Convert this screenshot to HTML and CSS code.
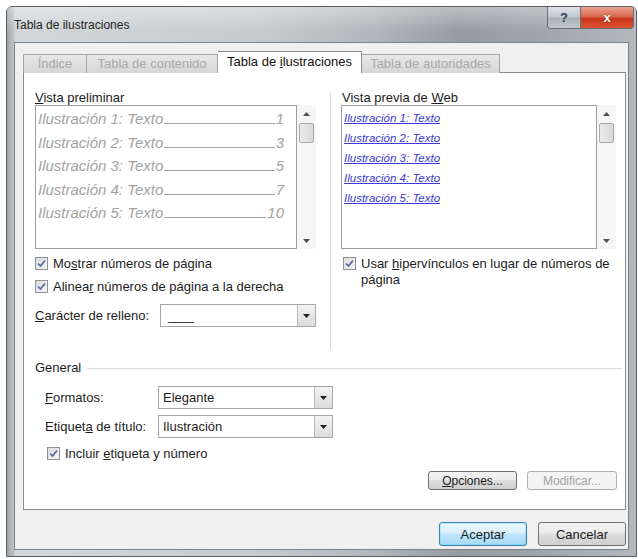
FILE: index.html
```html
<!DOCTYPE html>
<html lang="es">
<head>
<meta charset="utf-8">
<title>Tabla de ilustraciones</title>
<link rel="stylesheet" href="styles.css">
</head>
<body>
<div class="window">
  <div class="titlebar">
    <span class="title">Tabla de ilustraciones</span>
    <div class="caption-buttons">
      <span class="cap-btn help">?</span>
      <span class="cap-btn close">x</span>
    </div>
  </div>

  <div class="client">
    <div class="tabs">
      <span class="tab tab-indice">Índice</span>
      <span class="tab tab-contenido">Tabla de contenido</span>
      <span class="tab tab-active">Tabla de <u>i</u>lustraciones</span>
      <span class="tab tab-autoridades">Tabla de autoridades</span>
    </div>

    <div class="panel">
      <div class="panes">
        <div class="pane pane-left">
          <div class="caption-label"><u>V</u>ista preliminar</div>
          <div class="listwrap">
            <div class="list list-print">
              <div class="entry"><span>Ilustración 1: Texto</span><span class="leader"></span><span class="num">1</span></div>
              <div class="entry"><span>Ilustración 2: Texto</span><span class="leader"></span><span class="num">3</span></div>
              <div class="entry"><span>Ilustración 3: Texto</span><span class="leader"></span><span class="num">5</span></div>
              <div class="entry"><span>Ilustración 4: Texto</span><span class="leader"></span><span class="num">7</span></div>
              <div class="entry"><span>Ilustración 5: Texto</span><span class="leader"></span><span class="num">10</span></div>
            </div>
            <div class="scrollbar">
              <span class="sb-btn"><svg width="7" height="4" viewBox="0 0 7 4"><path d="M0 4 L3.5 0 L7 4 Z"/></svg></span>
              <span class="sb-thumb"></span>
              <span class="sb-track"></span>
              <span class="sb-btn"><svg width="7" height="4" viewBox="0 0 7 4"><path d="M0 0 L7 0 L3.5 4 Z"/></svg></span>
            </div>
          </div>
          <label class="check row-show">
            <span class="box"><svg width="11" height="11" viewBox="0 0 11 11"><path d="M2 5.5 L4.5 8 L9 2.5"/></svg></span>
            <span class="check-text">Mo<u>s</u>trar números de página</span>
          </label>
          <label class="check row-align">
            <span class="box"><svg width="11" height="11" viewBox="0 0 11 11"><path d="M2 5.5 L4.5 8 L9 2.5"/></svg></span>
            <span class="check-text">Alinea<u>r</u> números de página a la derecha</span>
          </label>
          <div class="field-row row-fill">
            <span class="field-label fill-label"><u>C</u>arácter de relleno:</span>
            <div class="select select-fill">
              <span class="val fill-val">____</span>
              <span class="arrow"><svg width="7" height="4" viewBox="0 0 7 4"><path d="M0 0 L7 0 L3.5 4 Z"/></svg></span>
            </div>
          </div>
        </div>

        <div class="sep"></div>

        <div class="pane pane-right">
          <div class="caption-label">Vista previa de <u>W</u>eb</div>
          <div class="listwrap">
            <div class="list list-web">
              <div class="link">Ilustración 1: Texto</div>
              <div class="link">Ilustración 2: Texto</div>
              <div class="link">Ilustración 3: Texto</div>
              <div class="link">Ilustración 4: Texto</div>
              <div class="link">Ilustración 5: Texto</div>
            </div>
            <div class="scrollbar">
              <span class="sb-btn"><svg width="7" height="4" viewBox="0 0 7 4"><path d="M0 4 L3.5 0 L7 4 Z"/></svg></span>
              <span class="sb-thumb"></span>
              <span class="sb-track"></span>
              <span class="sb-btn"><svg width="7" height="4" viewBox="0 0 7 4"><path d="M0 0 L7 0 L3.5 4 Z"/></svg></span>
            </div>
          </div>
          <label class="check row-show row-web">
            <span class="box"><svg width="11" height="11" viewBox="0 0 11 11"><path d="M2 5.5 L4.5 8 L9 2.5"/></svg></span>
            <span class="check-text">
              <span class="line">Usar <u>h</u>ipervínculos en lugar de números de</span>
              <span class="line">página</span>
            </span>
          </label>
        </div>
      </div>

      <div class="general">
        <div class="group-head">
          <span>General</span>
          <span class="group-line"></span>
        </div>
        <div class="field-row row-format">
          <span class="field-label fmt-label"><u>F</u>ormatos:</span>
          <div class="select select-wide">
            <span class="val">Elegante</span>
            <span class="arrow"><svg width="7" height="4" viewBox="0 0 7 4"><path d="M0 0 L7 0 L3.5 4 Z"/></svg></span>
          </div>
        </div>
        <div class="field-row row-caption">
          <span class="field-label fmt-label">Etiquet<u>a</u> de título:</span>
          <div class="select select-wide">
            <span class="val">Ilustración</span>
            <span class="arrow"><svg width="7" height="4" viewBox="0 0 7 4"><path d="M0 0 L7 0 L3.5 4 Z"/></svg></span>
          </div>
        </div>
        <label class="check row-include">
          <span class="box"><svg width="11" height="11" viewBox="0 0 11 11"><path d="M2 5.5 L4.5 8 L9 2.5"/></svg></span>
          <span class="check-text">Incluir <u>e</u>tiqueta y número</span>
        </label>
      </div>

      <div class="panel-buttons">
        <button class="btn btn-small"><u>O</u>pciones...</button>
        <button class="btn btn-small btn-disabled" disabled>Modificar...</button>
      </div>
    </div>

    <div class="footer">
      <button class="btn btn-big btn-default">Aceptar</button>
      <button class="btn btn-big">Cancelar</button>
    </div>
  </div>
</div>
</body>
</html>
```

FILE: styles.css
```css
* { box-sizing: border-box; }

body {
  margin: 0;
  background: #ffffff;
  font-family: "Liberation Sans", Arial, sans-serif;
  font-size: 13px;
  color: #1c1c1c;
}

u { text-decoration: underline; text-underline-offset: 1px; }

/* window frame */
.window {
  margin: 6px 0 0 6px;
  width: 631px;
  height: 551px;
  border: 1px solid #5a5f64;
  border-radius: 6px 6px 0 0;
  padding: 0 7px 6px;
  display: flex;
  flex-direction: column;
  background:
    linear-gradient(to right, #9da2a7 0px, #b4b8bc 4px, #bfc3c7 7px, rgba(191,195,199,0) 8px),
    linear-gradient(to right, #d3d7da 0%, #c7cbce 40%, #b3b7bb 58%, #969ba0 72%, #9fa4a9 84%, #b4b8bc 100%);
}

.titlebar {
  height: 35px;
  flex: none;
  display: flex;
  justify-content: space-between;
  align-items: flex-start;
  background: linear-gradient(to bottom, rgba(255,255,255,0.35), rgba(255,255,255,0) 70%);
  margin: 0 -7px;
  padding: 0 7px;
}

.title {
  margin-top: 11px;
  line-height: 14px;
  font-size: 12px;
  color: #1e1e1e;
}

.caption-buttons {
  display: flex;
  margin-right: -5px;
}

.cap-btn {
  height: 22px;
  display: flex;
  align-items: center;
  justify-content: center;
  color: #fff;
  font-weight: bold;
  border: 1px solid #6b6f74;
  border-top: none;
}

.help {
  width: 33px;
  border-radius: 0 0 0 4px;
  border-right: none;
  background: linear-gradient(to bottom, #dfe3e8 0%, #c3c8ce 45%, #a9b0b8 55%, #c2c8cf 100%);
  color: #2f3e63;
  font-size: 13px;
}

.close {
  width: 54px;
  border-radius: 0 0 4px 0;
  background: linear-gradient(to bottom, #eba392 0%, #d9674f 45%, #c8351a 55%, #dc5233 100%);
  font-size: 13px;
  text-shadow: 0 0 2px #7a1a0a;
}

/* client area */
.client {
  flex: 1;
  background: #f0f0f0;
  border: 1px solid #7d8287;
  padding: 8px 2px 0 8px;
  display: flex;
  flex-direction: column;
}

.tabs {
  height: 22px;
  display: flex;
  align-items: flex-end;
  margin-bottom: -1px;
  position: relative;
  z-index: 1;
}

.tab {
  height: 19px;
  line-height: 17px;
  text-align: center;
  border: 1px solid #a3a5a8;
  border-bottom: none;
  background: linear-gradient(to bottom, #e8e8e8, #d6d6d6);
  color: #a8a8a8;
  white-space: nowrap;
}

.tab + .tab { border-left: none; }

.tab-indice { width: 64px; }
.tab-contenido { width: 131px; }
.tab-autoridades { width: 138px; }

.tab-active {
  width: 144px;
  height: 22px;
  line-height: 20px;
  background: #ffffff;
  color: #111;
  border: 1px solid #898c95;
  border-bottom: none;
}

.tab-active + .tab { border-left: none; }

.panel {
  width: 603px;
  height: 438px;
  background: #ffffff;
  border: 1px solid #898c95;
  padding: 18px 8px 0 11px;
  display: flex;
  flex-direction: column;
}

.panes {
  display: flex;
  height: 259px;
}

.pane-left { width: 282px; }
.pane-right { width: 275px; }

.sep {
  width: 1px;
  background: #d5d5d5;
  margin: 1px 10px 0 13px;
}

.caption-label {
  height: 14px;
  line-height: 14px;
  color: #1c1c1c;
}

.pane-right .caption-label { padding-left: 1px; }

.listwrap {
  display: flex;
  height: 144px;
}

.list {
  border: 1px solid #9a9ea3;
  background: #fff;
}

.list-print {
  width: 262px;
  padding: 1px 12px 0 2px;
}

.list-web {
  width: 256px;
  padding: 2px 0 0 2px;
}

.entry {
  display: flex;
  align-items: baseline;
  height: 23.5px;
  line-height: 23.5px;
  font-style: italic;
  font-size: 15px;
  color: #a3a3a3;
}

.leader {
  flex: 1;
  border-bottom: 1px solid #a3a3a3;
  margin: 0 1px;
}

.num { min-width: 8px; text-align: right; }

.link {
  height: 20px;
  line-height: 20px;
  font-style: italic;
  font-size: 11.5px;
  color: #3a3ad6;
  text-decoration: underline;
}

.scrollbar {
  width: 19px;
  display: flex;
  flex-direction: column;
  align-items: center;
  background: #f6f6f6;
}

.sb-btn {
  height: 17px;
  width: 100%;
  display: flex;
  align-items: center;
  justify-content: center;
}

.sb-btn svg { fill: #505050; }

.sb-thumb {
  width: 15px;
  height: 20px;
  margin-top: 1px;
  border: 1px solid #a9a9a9;
  border-radius: 2px;
  background: linear-gradient(to right, #eaeaea, #d9d9d9);
}

.sb-track { flex: 1; }

/* checkboxes */
.check {
  display: flex;
  align-items: flex-start;
  gap: 5px;
  line-height: 16px;
  color: #1c1c1c;
}

.check-text { display: block; }
.check-text .line { display: block; white-space: nowrap; }

.box {
  flex: none;
  width: 13px;
  height: 13px;
  margin-top: 1px;
  border: 1px solid #8f9194;
  background: linear-gradient(to bottom right, #dcdcdc, #f6f6f6);
  display: flex;
  align-items: center;
  justify-content: center;
}

.box svg path {
  fill: none;
  stroke: #5567a8;
  stroke-width: 1.7;
}

.row-show { margin-top: 7px; }
.row-align { margin-top: 7px; }
.row-web { padding-left: 2px; }

/* combo boxes */
.field-row {
  display: flex;
  align-items: center;
}

.row-fill { margin-top: 9px; }

.field-label { color: #1c1c1c; }
.fill-label { width: 125px; }
.fmt-label { width: 113px; }

.select {
  height: 23px;
  border: 1px solid #a4a7ab;
  background: #fff;
  display: flex;
}

.select-fill { width: 156px; }
.select-wide { width: 175px; }

.val {
  flex: 1;
  line-height: 21px;
  padding-left: 4px;
}

.fill-val { padding-left: 7px; letter-spacing: -1px; }

.arrow {
  width: 18px;
  border-left: 1px solid #b7b9bc;
  background: linear-gradient(to bottom, #f3f3f3, #dcdcdc);
  display: flex;
  align-items: center;
  justify-content: center;
}

.arrow svg { fill: #222; }

/* general group */
.general { margin-top: 11px; }

.group-head {
  display: flex;
  align-items: center;
  height: 14px;
  line-height: 14px;
}

.group-line {
  flex: 1;
  height: 1px;
  background: #dcdcdc;
  margin: 1px -6px 0 6px;
}

.row-format { margin-top: 11px; padding-left: 10px; }
.row-caption { margin-top: 6px; padding-left: 10px; }
.row-include { margin-top: 8px; padding-left: 12px; }

/* buttons */
.panel-buttons {
  display: flex;
  justify-content: flex-end;
  gap: 10px;
  margin-top: 9px;
}

.btn {
  font-family: inherit;
  font-size: 13px;
  color: #1c1c1c;
  border: 1px solid #707070;
  border-radius: 3px;
  background: linear-gradient(to bottom, #f3f3f3 0%, #ebebeb 45%, #dddddd 50%, #cfcfcf 100%);
  padding: 0;
}

.btn-small { width: 89px; height: 19px; font-size: 12px; }
.btn-small + .btn-small { width: 90px; }

.btn-disabled {
  border-color: #adb2b5;
  background: #f4f4f4;
  color: #a3a3a3;
}

.footer {
  display: flex;
  justify-content: flex-end;
  gap: 11px;
  margin-top: 12px;
}

.btn-big { width: 88px; height: 24px; }

.btn-default {
  border-color: #3c7fb1;
  background: linear-gradient(to bottom, #eaf6fd 0%, #d9f0fc 45%, #bee6fd 50%, #a7d9f5 100%);
  box-shadow: inset 0 0 0 1px #48d8fb55;
}
```
